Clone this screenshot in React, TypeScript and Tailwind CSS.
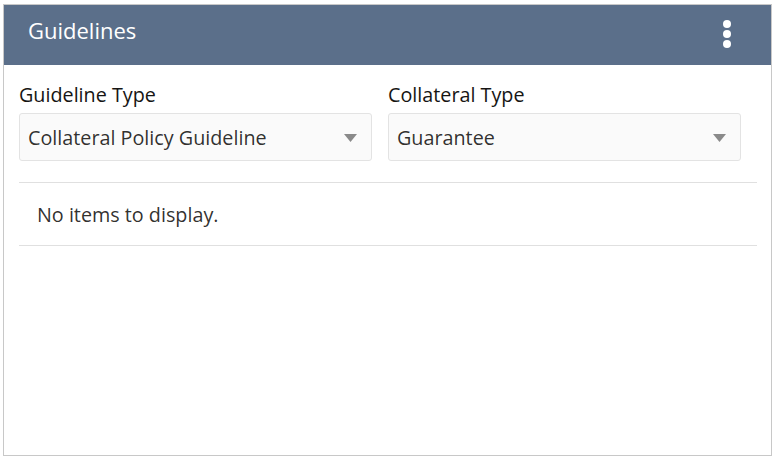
import React from 'react'

const font = { fontFamily: '"Segoe UI", "Open Sans", "Noto Sans", sans-serif' }

const Caret = () => (
  <svg width="13" height="8" viewBox="0 0 13 8" className="shrink-0">
    <path d="M0 0 H13 L6.5 8 Z" fill="#8a8a8a" />
  </svg>
)

const SelectBox = ({ label, value }: { label: string; value: string }) => (
  <div className="flex flex-col pr-4">
    <label className="text-[19.75px] leading-[26px] text-[#161513] mb-[5px]">{label}</label>
    <div className="h-[48px] flex items-center justify-between pl-[8px] pr-[14px] pt-[2px] bg-[#fafafa] border border-[#e3e3e3] rounded-[3px]">
      <span className="text-[19.75px] text-[#161513]/90">{value}</span>
      <Caret />
    </div>
  </div>
)

export default function App() {
  return (
    <div className="w-[776px] h-[460px] bg-white pt-[4px] pl-[3px] pr-[4px] pb-[4px]" style={font}>
      <div className="h-full flex flex-col border border-[#c8c8c8] bg-white">
        <div className="h-[60px] bg-[#5b6f8a] flex items-center justify-between pl-[24px] pr-[40px] shrink-0">
          <h1 className="text-[22px] text-white leading-none -mt-[10px]">Guidelines</h1>
          <div className="flex flex-col gap-[2px] -mt-[3px]">
            <span className="w-[8px] h-[8px] rounded-full bg-white" />
            <span className="w-[8px] h-[8px] rounded-full bg-white" />
            <span className="w-[8px] h-[8px] rounded-full bg-white" />
          </div>
        </div>
        <div className="pl-[15px] pr-[14px] pt-[17px]">
          <div className="grid grid-cols-2">
            <SelectBox label="Guideline Type" value="Collateral Policy Guideline" />
            <SelectBox label="Collateral Type" value="Guarantee" />
          </div>
          <div className="mt-[21px] border-t border-b border-[#e0e0e0] h-[64px] flex items-center pl-[18px] pt-[2px]">
            <span className="text-[19.75px] text-[#161513]/90">No items to display.</span>
          </div>
        </div>
      </div>
    </div>
  )
}
